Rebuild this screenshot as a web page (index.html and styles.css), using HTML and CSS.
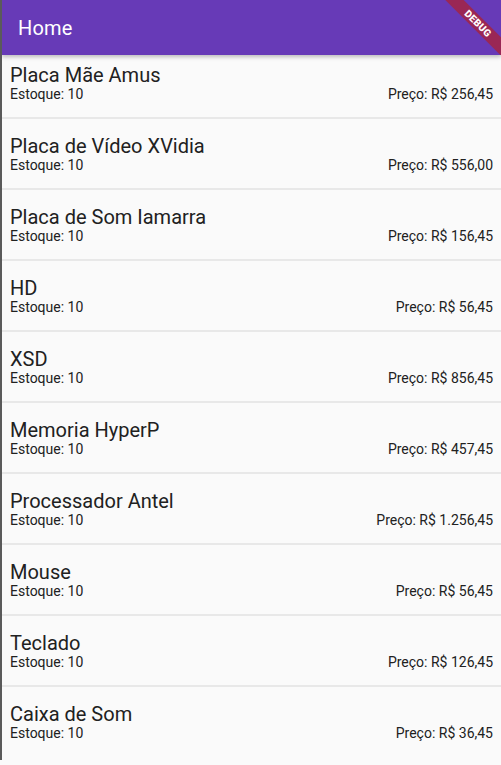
FILE: index.html
```html
<!DOCTYPE html>
<html lang="pt">
<head>
<meta charset="utf-8">
<link rel="stylesheet" href="styles.css">
</head>
<body>
<div class="frame">
  <header class="appbar">
    <span class="title">Home</span>
    <div class="banner"><span>DEBUG</span></div>
  </header>
  <ul class="list">
    <li class="item first"><div class="name">Placa Mãe Amus</div><div class="row"><span>Estoque: 10</span><span>Preço: R$ 256,45</span></div></li>
    <li class="item"><div class="name">Placa de Vídeo XVidia</div><div class="row"><span>Estoque: 10</span><span>Preço: R$ 556,00</span></div></li>
    <li class="item"><div class="name">Placa de Som Iamarra</div><div class="row"><span>Estoque: 10</span><span>Preço: R$ 156,45</span></div></li>
    <li class="item"><div class="name">HD</div><div class="row"><span>Estoque: 10</span><span>Preço: R$ 56,45</span></div></li>
    <li class="item"><div class="name">XSD</div><div class="row"><span>Estoque: 10</span><span>Preço: R$ 856,45</span></div></li>
    <li class="item"><div class="name">Memoria HyperP</div><div class="row"><span>Estoque: 10</span><span>Preço: R$ 457,45</span></div></li>
    <li class="item"><div class="name">Processador Antel</div><div class="row"><span>Estoque: 10</span><span>Preço: R$ 1.256,45</span></div></li>
    <li class="item"><div class="name">Mouse</div><div class="row"><span>Estoque: 10</span><span>Preço: R$ 56,45</span></div></li>
    <li class="item"><div class="name">Teclado</div><div class="row"><span>Estoque: 10</span><span>Preço: R$ 126,45</span></div></li>
    <li class="item last"><div class="name">Caixa de Som</div><div class="row"><span>Estoque: 10</span><span>Preço: R$ 36,45</span></div></li>
  </ul>
</div>
</body>
</html>
```
FILE: styles.css
```css
html, body {
  margin: 0;
  padding: 0;
  background: #fafafa;
  overflow: hidden;
}
.frame {
  width: 501px;
  height: 760px;
  box-sizing: border-box;
  border-left: 2px solid #5a5a5a;
  background: #fafafa;
  font-family: Roboto, "Liberation Sans", sans-serif;
  color: #212121;
  overflow: hidden;
  position: relative;
}
.appbar {
  height: 55px;
  background: #673ab7;
  display: flex;
  align-items: center;
  padding-left: 16px;
  box-shadow: 0 2px 4px rgba(0,0,0,0.25);
  position: relative;
  z-index: 2;
  overflow: hidden;
}
.title {
  color: #fff;
  font-size: 20px;
  font-weight: 400;
  letter-spacing: 0.2px;
}
.banner {
  position: absolute;
  top: 17px;
  right: -27px;
  width: 100px;
  height: 13px;
  background: rgba(183, 28, 28, 0.63);
  transform: rotate(45deg);
  display: flex;
  justify-content: center;
  align-items: center;
}
.banner span {
  color: #fff;
  font-size: 10px;
  line-height: 13px;
  font-weight: 900;
  letter-spacing: 0.3px;
}
.list {
  list-style: none;
  margin: 0;
  padding: 0;
}
.item {
  height: 71px;
  box-sizing: border-box;
  padding: 16px 8px 0;
  border-bottom: 2px solid #e8e8e8;
}
.item.first {
  height: 64px;
  padding-top: 9px;
}
.item.last {
  border-bottom: none;
}
.name {
  font-size: 20px;
  line-height: 22px;
}
.row {
  display: flex;
  justify-content: space-between;
  font-size: 14px;
  line-height: 16px;
}
```
